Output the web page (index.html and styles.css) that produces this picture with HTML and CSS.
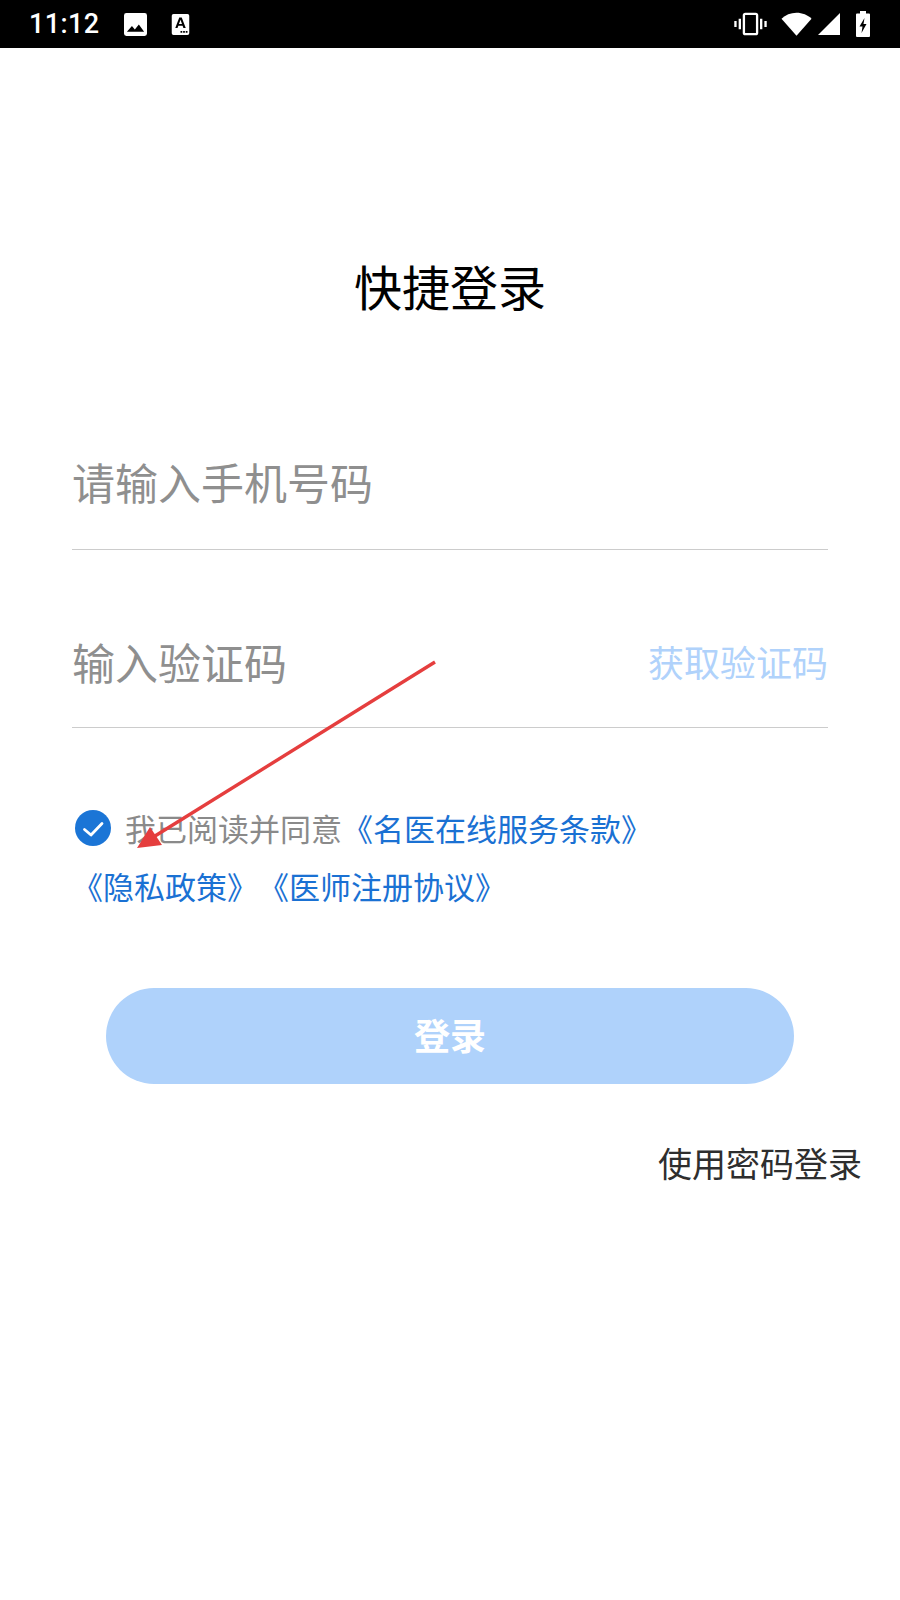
FILE: index.html
```html
<!DOCTYPE html>
<html lang="zh">
<head>
<meta charset="utf-8">
<title>快捷登录</title>
<link rel="stylesheet" href="styles.css">
</head>
<body>
<div class="page">
  <header class="status">
    <div class="status-left">
      <span class="time">11:12</span>
      <svg class="ic-photo" viewBox="0 0 24 24"><path fill="#fff" fill-rule="evenodd" d="M2.500 0h19A2.500 2.500 0 0 1 24 2.500v19a2.500 2.500 0 0 1-2.500 2.500h-19A2.500 2.500 0 0 1 0 21.500v-19A2.500 2.500 0 0 1 2.500 0zM3 19.500h18l-5.500-7.500-4.200 5.300-3-3.700z"/></svg>
      <svg class="ic-a" viewBox="0 0 20 24"><path fill="#fff" fill-rule="evenodd" d="M2 0h16a2 2 0 0 1 2 2v20a2 2 0 0 1-2 2H2a2 2 0 0 1-2-2V2a2 2 0 0 1 2-2zM8.600 4 4 16h2.600l.9-2.600h4.900l.9 2.600H16L11.400 4zM8.200 11.300 10 6.500l1.700 4.800zM10 19.500v2h2v-2zM13 19.500v2h2v-2zM16 19.500v2h2v-2z"/></svg>
    </div>
    <div class="status-right">
      <svg class="ic-vib" viewBox="0 0 34 24"><g fill="none" stroke="#fff" stroke-width="2.400"><rect x="10.200" y="1.500" width="13.600" height="21" rx="1.500"/><path d="M6 6.500v11M28 6.500v11M1.500 9v6M32.500 9v6"/></g></svg>
      <svg class="ic-wifi" viewBox="0 0 32 24"><path fill="#fff" d="M16 24 0.500 6.500C4.500 2.800 10 .5 16 .5s11.500 2.300 15.500 6z"/></svg>
      <svg class="ic-signal" viewBox="0 0 22 22"><path fill="#fff" d="M22 0v22H0z"/></svg>
      <svg class="ic-batt" viewBox="0 0 14 26"><path fill="#fff" fill-rule="evenodd" d="M4 0h6v2.500h3a1 1 0 0 1 1 1V25a1 1 0 0 1-1 1H1a1 1 0 0 1-1-1V3.500a1 1 0 0 1 1-1h3zM8.500 7 3.500 15.500h3L5.500 22l5-9h-3z"/></svg>
    </div>
  </header>

  <main class="content">
    <h1 class="title">快捷登录</h1>
    <div class="field field-phone"><span class="placeholder">请输入手机号码</span></div>
    <div class="field field-code">
      <span class="placeholder">输入验证码</span>
      <span class="get-code">获取验证码</span>
    </div>
    <div class="terms">
      <div class="terms-row">
        <svg class="check" viewBox="0 0 36 36"><circle cx="18" cy="18" r="18" fill="#1b75d6"/><path d="M9.500 19.500 16 25 27 13.500" fill="none" stroke="#fff" stroke-width="2.800" stroke-linecap="round" stroke-linejoin="round"/></svg>
        <span class="terms-text">我已阅读并同意<span class="link">《名医在线服务条款》</span></span>
      </div>
      <div class="terms-links link">《隐私政策》《医师注册协议》</div>
    </div>
    <div class="submit">登录</div>
    <div class="alt">使用密码登录</div>
  </main>

  <svg class="arrow" viewBox="0 0 900 1600" aria-hidden="true">
    <path d="M435 662 155 836" fill="none" stroke="#e53e3e" stroke-width="3.400"/>
    <path d="M137 848 150 827 162 845z" fill="#e53e3e"/>
  </svg>
</div>
</body>
</html>
```
FILE: styles.css
```css
* { box-sizing: border-box; }
html, body { margin: 0; padding: 0; background: #fff; }
body { font-family: "Noto Sans CJK SC", "Noto Sans", sans-serif; }
.page { position: relative; width: 900px; height: 1600px; overflow: hidden; background: #fff; }

.status { height: 48px; background: #000; display: flex; justify-content: space-between; align-items: center; padding: 0 30px 0 29px; }
.status-left, .status-right { display: flex; align-items: center; }
.time { font-family: Roboto, sans-serif; font-size: 27px; font-weight: 500; color: #fff; letter-spacing: .4px; width: 95px; }
.ic-photo { width: 23px; height: 23px; margin-right: 24px; }
.ic-a { width: 19px; height: 21px; }
.ic-vib { width: 33px; height: 24px; margin-right: 14px; }
.ic-wifi { width: 31px; height: 24px; margin-right: 6px; }
.ic-signal { width: 22px; height: 22px; margin-right: 16px; }
.ic-batt { width: 14px; height: 26px; }

.content { display: flex; flex-direction: column; }
.title { margin: 202px 0 0; height: 70px; line-height: 70px; font-size: 48px; font-weight: 400; color: #000; text-align: center; }

.field { margin: 0 72px; display: flex; justify-content: space-between; align-items: center; border-bottom: 1px solid #cccccc; height: 178px; padding-top: 44px; }
.field-phone { margin-top: 52px; padding-top: 40px; }
.placeholder { font-size: 43px; color: #8f8f8f; line-height: 60px; }
.get-code { font-size: 36px; color: #b0d2fb; line-height: 60px; }

.terms { margin: 69px 0 0 75px; text-spacing-trim: space-all; }
.terms-row { display: flex; align-items: center; height: 60px; }
.check { width: 36px; height: 36px; margin: 2px 14px 0 0; }
.terms-text { font-size: 31px; color: #8a8a8a; }
.link { color: #1a71d3; }
.terms-links { font-size: 31px; line-height: 58px; margin-left: -3px; }

.submit { margin: 73px 0 0 106px; width: 688px; height: 96px; padding-bottom: 4px; border-radius: 48px; background: #afd2fb; color: #fff; font-size: 36px; font-weight: 700; display: flex; align-items: center; justify-content: center; }
.alt { margin: 54px 38px 0 0; text-align: right; font-size: 34px; line-height: 50px; color: #2e2e2e; }

.arrow { position: absolute; left: 0; top: 0; width: 900px; height: 1600px; pointer-events: none; }
```
